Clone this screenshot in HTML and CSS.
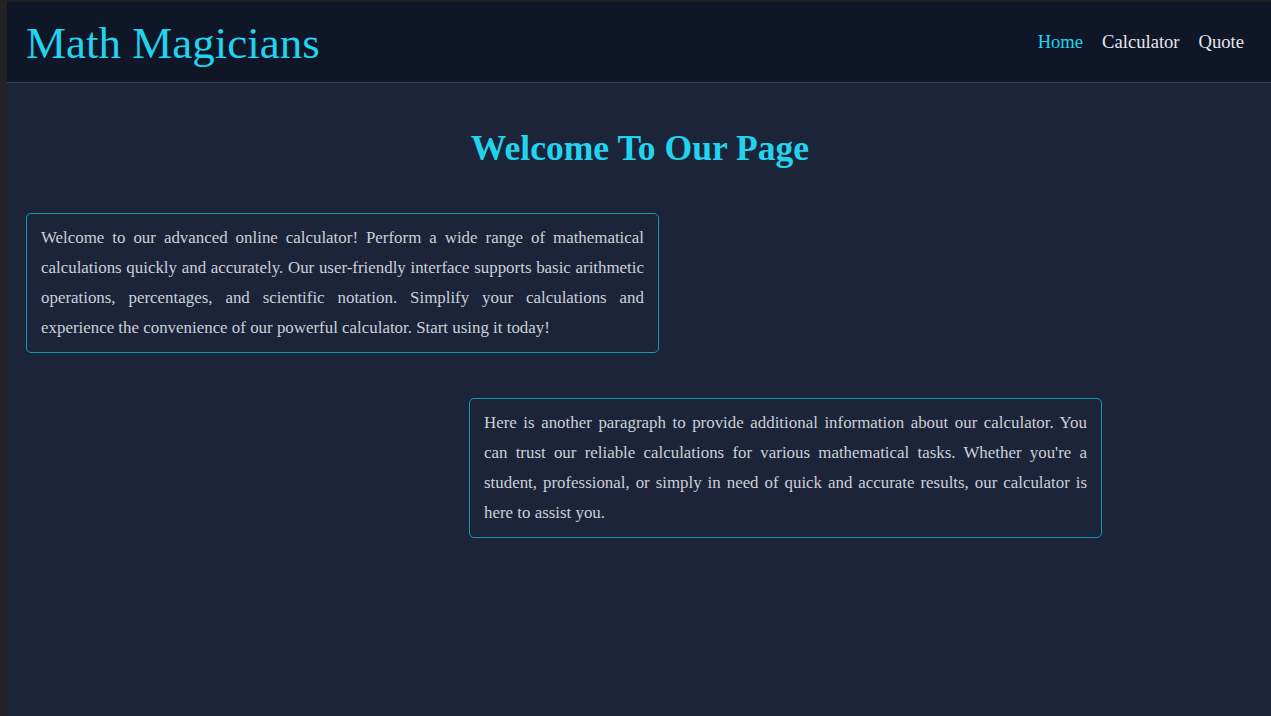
FILE: index.html
```html
<!DOCTYPE html>
<html lang="en">
<head>
<meta charset="utf-8">
<title>Math Magicians</title>
<link rel="stylesheet" href="styles.css">
</head>
<body>
<div class="app">
  <header class="header">
    <h1 class="logo">Math Magicians</h1>
    <nav class="nav">
      <a class="nav-link active" href="#">Home</a>
      <a class="nav-link" href="#">Calculator</a>
      <a class="nav-link" href="#">Quote</a>
    </nav>
  </header>
  <main class="main">
    <h2 class="title">Welcome To Our Page</h2>
    <p class="card card-left">Welcome to our advanced online calculator! Perform a wide range of mathematical calculations quickly and accurately. Our user-friendly interface supports basic arithmetic operations, percentages, and scientific notation. Simplify your calculations and experience the convenience of our powerful calculator. Start using it today!</p>
    <p class="card card-right">Here is another paragraph to provide additional information about our calculator. You can trust our reliable calculations for various mathematical tasks. Whether you're a student, professional, or simply in need of quick and accurate results, our calculator is here to assist you.</p>
  </main>
</div>
</body>
</html>
```
FILE: styles.css
```css
* { box-sizing: border-box; }
html, body { height: 100%; }
body {
  margin: 0;
  padding: 2px 0 0 7px;
  background: #222222;
  font-family: "Liberation Serif", "Times New Roman", serif;
}
.app {
  min-height: 100%;
  background: #1c2439;
  display: flex;
  flex-direction: column;
}
.header {
  height: 81px;
  background: #0e1628;
  border-bottom: 1px solid #3a4252;
  display: flex;
  align-items: center;
  justify-content: space-between;
  padding: 0 27px 0 19px;
}
.logo {
  margin: 0;
  font-weight: normal;
  font-size: 45px;
  color: #22d3ee;
  line-height: 1;
  position: relative;
  top: 1px;
}
.nav {
  display: flex;
  gap: 19px;
}
.nav-link {
  font-size: 18.6px;
  color: #e5e7eb;
  text-decoration: none;
}
.nav-link.active { color: #22d3ee; }
.main {
  flex: 1;
  padding: 0 19px;
  display: flex;
  flex-direction: column;
}
.title {
  margin: 45px 0 45px;
  text-align: center;
  font-size: 35.6px;
  font-weight: bold;
  color: #22d3ee;
  line-height: 40px;
  position: relative;
  left: 1px;
}
.card {
  width: 633px;
  margin: 0;
  padding: 9px 14px;
  border: 1px solid #0e9bb5;
  border-radius: 5px;
  color: #cbd0d8;
  font-size: 16.9px;
  line-height: 30px;
  text-align: justify;
}
.card-right {
  margin-top: 45px;
  margin-left: 443px;
}
```
